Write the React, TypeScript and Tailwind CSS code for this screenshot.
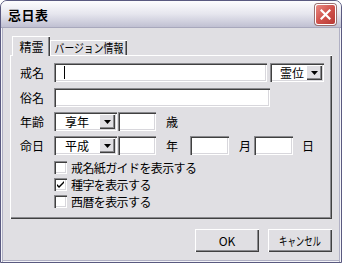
import React from 'react';

// Classic 3D edge helpers (Windows XP silver look)
const sunken =
  'bg-white shadow-[inset_1px_1px_0_#8a8a8e,inset_2px_2px_0_#404040,inset_-1px_-1px_0_#ffffff,inset_-2px_-2px_0_#d8d7dc]';
const raised =
  'bg-[#e0dfe3] shadow-[inset_1px_1px_0_#ffffff,inset_-1px_-1px_0_#404040,inset_-2px_-2px_0_#8a8a8e]';

function Arrow() {
  return (
    <svg width="7" height="4" viewBox="0 0 7 4" className="block">
      <path d="M0 0h7L3.5 4z" fill="#000" />
    </svg>
  );
}

function Combo({ width, text, align = 'left' }: { width: string; text: string; align?: 'left' | 'right' }) {
  return (
    <div className={`${width} h-[19px] ${sunken} flex items-center pl-[2px] pr-[2px]`}>
      <div className={`flex-1 text-[12px] leading-none ${align === 'right' ? 'text-right pr-[2px]' : 'pl-[9px]'}`}>
        {text}
      </div>
      <div className={`w-[16px] h-[15px] ${raised} flex items-center justify-center`}>
        <Arrow />
      </div>
    </div>
  );
}

function Box({ width, children }: { width: string; children?: React.ReactNode }) {
  return <div className={`${width} h-[19px] ${sunken} flex items-center`}>{children}</div>;
}

function Check({ checked, label }: { checked?: boolean; label: string }) {
  return (
    <div className="flex items-center h-[13px]">
      <div className={`w-[13px] h-[13px] ${sunken} flex items-center justify-center`}>
        {checked && (
          <svg width="9" height="9" viewBox="0 0 9 9" className="block">
            <path d="M1 4l2 2 5-5v2L3 8 1 6z" fill="#000" />
          </svg>
        )}
      </div>
      <span className="ml-[4px] text-[12px] leading-none tracking-[-0.6px]">{label}</span>
    </div>
  );
}

export default function App() {
  return (
    <div className="w-[342px] h-[263px] font-['Noto_Sans_CJK_JP',sans-serif] text-black">
      <div className="w-full h-full flex flex-col border border-[#5a5a80] rounded-t-[7px] overflow-hidden bg-[#e0dfe3]">
        {/* Title bar */}
        <div className="h-[27px] flex items-center pl-[7px] pr-[5px] bg-gradient-to-b from-[#fdfdfe] via-[#e6e6ee] to-[#c0c0d2] border-b border-[#a8a8bc]">
          <span className="text-[13px] font-bold leading-none tracking-[0.5px]">忌日表</span>
          <div className="ml-auto w-[21px] h-[21px] rounded-[3px] border border-white bg-gradient-to-br from-[#e88a84] via-[#d0524c] to-[#b83a36] flex items-center justify-center shadow-[0_0_0_1px_#9a7070]">
            <svg width="11" height="11" viewBox="0 0 11 11" className="block">
              <path d="M1.5 1.5l8 8M9.5 1.5l-8 8" stroke="#fff" strokeWidth="2.2" strokeLinecap="square" />
            </svg>
          </div>
        </div>

        {/* Body */}
        <div className="flex-1 flex flex-col px-[9px] pt-[8px] shadow-[inset_1px_0_0_#f4f4f8,inset_2px_0_0_#b0b0c4,inset_-1px_0_0_#f4f4f8,inset_-2px_0_0_#b0b0c4,inset_0_-1px_0_#f4f4f8,inset_0_-2px_0_#b0b0c4]">
          {/* Tabs */}
          <div className="flex items-end h-[19px] pl-[2px]">
            <div className="relative z-10 -mb-[1px] w-[38px] h-[20px] bg-[#e0dfe3] border-t border-l border-white shadow-[inset_-1px_0_0_#404040,inset_-2px_0_0_#8a8a8e] flex items-center justify-center">
              <span className="text-[12px] leading-none">精霊</span>
            </div>
            <div className="w-[77px] h-[15px] border-t border-l border-white shadow-[inset_-1px_0_0_#404040,inset_-2px_0_0_#8a8a8e] flex items-center justify-center overflow-hidden">
              <span className="inline-block text-[12px] leading-none whitespace-nowrap scale-x-[0.82]">バージョン情報</span>
            </div>
          </div>

          {/* Tab page */}
          <div className="h-[164px] pl-[10px] pt-[8px] bg-[#e0dfe3] shadow-[inset_1px_1px_0_#ffffff,inset_-1px_-1px_0_#404040,inset_-2px_-2px_0_#8a8a8e] text-[12px] leading-none">
            <div className="flex items-center h-[19px]">
              <span className="w-[34px]">戒名</span>
              <Box width="w-[213px]">
                <div className="ml-[10px] w-[1px] h-[13px] bg-black" />
              </Box>
              <div className="ml-[3px]">
                <Combo width="w-[54px]" text="霊位" align="right" />
              </div>
            </div>

            <div className="flex items-center h-[19px] mt-[6px]">
              <span className="w-[34px]">俗名</span>
              <Box width="w-[216px]" />
            </div>

            <div className="flex items-center h-[19px] mt-[5px]">
              <span className="w-[34px]">年齢</span>
              <Combo width="w-[63px]" text="享年" />
              <div className="ml-[1px]">
                <Box width="w-[38px]" />
              </div>
              <span className="ml-[10px]">歳</span>
            </div>

            <div className="flex items-center h-[19px] mt-[5px]">
              <span className="w-[34px]">命日</span>
              <Combo width="w-[63px]" text="平成" />
              <div className="ml-[1px]">
                <Box width="w-[38px]" />
              </div>
              <span className="ml-[10px]">年</span>
              <div className="ml-[12px]">
                <Box width="w-[39px]" />
              </div>
              <span className="ml-[10px]">月</span>
              <div className="ml-[3px]">
                <Box width="w-[39px]" />
              </div>
              <span className="ml-[9px]">日</span>
            </div>

            <div className="flex flex-col pl-[34px] mt-[6px] gap-[4px]">
              <Check label="戒名紙ガイドを表示する" />
              <Check checked label="種字を表示する" />
              <Check label="西暦を表示する" />
            </div>
          </div>

          {/* Buttons */}
          <div className="flex justify-end gap-[9px] mt-[10px]">
            <button className={`w-[64px] h-[23px] ${raised} flex items-center justify-center text-[12px] leading-none`}>
              OK
            </button>
            <button className={`w-[64px] h-[23px] ${raised} flex items-center justify-center text-[12px] leading-none`}>
              <span className="inline-block whitespace-nowrap scale-x-[0.7]">キャンセル</span>
            </button>
          </div>
        </div>
      </div>
    </div>
  );
}
